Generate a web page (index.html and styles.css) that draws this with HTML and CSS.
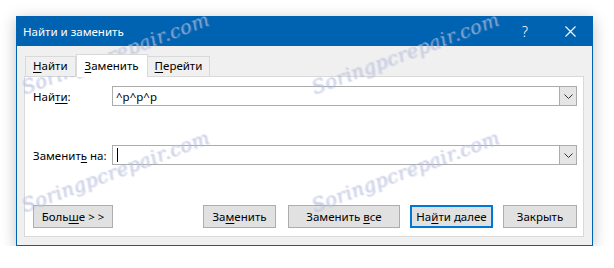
FILE: index.html
```html
<!DOCTYPE html>
<html lang="ru">
<head>
    <meta charset="UTF-8">
    <title>Найти и заменить</title>
    <link rel="stylesheet" href="styles.css">
</head>
<body>
    <div class="dialog">
        <div class="titlebar">
            <span class="title">Найти и заменить</span>
            <span class="help">?</span>
            <span class="close">
                <svg width="11" height="11" viewBox="0 0 11 11"><path d="M0.5 0.5 L10.5 10.5 M10.5 0.5 L0.5 10.5" stroke="#fff" stroke-width="1.1" fill="none"/></svg>
            </span>
        </div>
        <div class="content">
            <div class="tabs">
                <div class="tab"><u>Н</u>айти</div>
                <div class="tab on"><u>З</u>аменить</div>
                <div class="tab"><u>П</u>ерейти</div>
            </div>
            <div class="panel">
                <div class="row">
                    <label>Най<u>ти</u>:</label>
                    <div class="combo">
                        <span class="value">^p^p^p</span>
                        <span class="drop"><svg width="9" height="5" viewBox="0 0 9 5"><path d="M0.5 0.5 L4.5 4.5 L8.5 0.5" stroke="#333" stroke-width="1" fill="none"/></svg></span>
                    </div>
                </div>
                <div class="row second">
                    <label>Заменит<u>ь</u> на:</label>
                    <div class="combo">
                        <span class="value"><i class="caret"></i></span>
                        <span class="drop"><svg width="9" height="5" viewBox="0 0 9 5"><path d="M0.5 0.5 L4.5 4.5 L8.5 0.5" stroke="#333" stroke-width="1" fill="none"/></svg></span>
                    </div>
                </div>
                <div class="buttons">
                    <button class="more">Боль<u>ш</u>е &gt; &gt;</button>
                    <div class="group">
                        <button class="replace">За<u>м</u>енить</button>
                        <button class="all">Заменить <u>в</u>се</button>
                        <button class="next default">На<u>й</u>ти далее</button>
                        <button class="shut">Закрыть</button>
                    </div>
                </div>
            </div>
        </div>
        <span class="mark m1">Soringpcrepair.com</span>
        <span class="mark m2">Soringpcrepair.com</span>
        <span class="mark m3">Soringpcrepair.com</span>
        <span class="mark m4">Soringpcrepair.com</span>
    </div>
</body>
</html>
```

FILE: styles.css
```css
* { margin: 0; padding: 0; box-sizing: border-box; }
body { background: #fff; padding: 16px 0 0 16px; font-family: "Noto Sans", "Open Sans", sans-serif; font-size: 11.5px; color: #000; }
u { text-decoration: underline; text-underline-offset: 2px; }

.dialog { position: relative; width: 577px; height: 230px; background: #f0f0f0; border: 1px solid #0063b1; border-top: 0; box-shadow: 0 3px 14px rgba(0,0,0,.25); }
.titlebar { height: 30px; margin: 0 -1px; background: #0063b1; color: #fff; display: flex; align-items: center; padding-left: 7px; }
.title { flex: 1; }
.help { width: 20px; font-size: 14px; font-weight: 300; margin-right: 12px; text-align: center; }
.close { width: 46px; height: 30px; display: flex; align-items: center; justify-content: center; }

.content { padding: 8px 8px 8px 7px; }
.tabs { display: flex; align-items: flex-end; height: 22px; padding-left: 1px; position: relative; z-index: 1; }
.tab { height: 20px; line-height: 18px; padding: 0 7px; border: 1px solid #d9d9d9; border-bottom: 0; background: #f0f0f0; }
.tab + .tab { border-left: 0; }
.tab.on { height: 23px; margin-bottom: -1px; background: #fff; line-height: 22px; padding: 0 8px; border-left: 1px solid #d9d9d9; }
.tab.on + .tab { border-left: 0; }

.panel { height: 161px; background: #fff; border: 1px solid #d9d9d9; padding: 9px 6px 8px 8px; display: flex; flex-direction: column; }
.row { display: flex; align-items: center; height: 20px; }
.row.second { margin-top: 39px; }
.row label { width: 79px; }
.combo { flex: 1; height: 20px; border: 1px solid #acacac; display: flex; }
.value { flex: 1; padding-left: 3px; display: flex; align-items: center; }
.caret { display: block; width: 1px; height: 14px; background: #000; margin-left: 1px; }
.drop { width: 17px; background: #e5e5e5; border-left: 1px solid #acacac; display: flex; align-items: center; justify-content: center; }

.buttons { display: flex; margin-top: 40px; height: 23px; }
.group { display: flex; margin-left: auto; }
button { font: inherit; color: #000; height: 23px; background: #e1e1e1; border: 1px solid #adadad; outline: none; }
.more { width: 80px; }
.replace { width: 73px; }
.all { width: 112px; margin-left: 12px; }
.next { width: 83px; margin-left: 10px; }
.shut { width: 74px; margin-left: 10px; }
button.default { border: 2px solid #0078d7; }

.mark { position: absolute; pointer-events: none; font-family: "DejaVu Serif", serif; font-style: italic; font-size: 19px; letter-spacing: 0.5px; color: rgba(255,255,255,.3); text-shadow: 0 0 1px rgba(130,145,200,.45), 1px 1px 1px rgba(160,170,210,.3); transform: rotate(-20.5deg); transform-origin: left bottom; white-space: nowrap; }
.m1 { left: 9px; top: 60px; }
.m2 { left: 299px; top: 60px; }
.m3 { left: 9px; top: 178px; }
.m4 { left: 299px; top: 178px; }
```
